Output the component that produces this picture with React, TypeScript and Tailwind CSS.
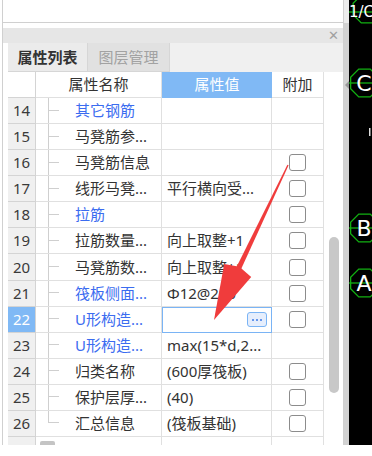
import React from "react";

type Row = {
  n: number;
  name: string;
  blue?: boolean;
  val?: string;
  cb?: boolean;
  editing?: boolean;
  last?: boolean;
};

const rows: Row[] = [
  { n: 14, name: "其它钢筋", blue: true },
  { n: 15, name: "马凳筋参..." },
  { n: 16, name: "马凳筋信息", cb: true },
  { n: 17, name: "线形马凳...", val: "平行横向受...", cb: true },
  { n: 18, name: "拉筋", blue: true, cb: true },
  { n: 19, name: "拉筋数量...", val: "向上取整+1", cb: true },
  { n: 20, name: "马凳筋数...", val: "向上取整+1", cb: true },
  { n: 21, name: "筏板侧面...", blue: true, val: "Φ12@200", cb: true },
  { n: 22, name: "U形构造...", blue: true, editing: true, cb: true },
  { n: 23, name: "U形构造...", blue: true, val: "max(15*d,2..." },
  { n: 24, name: "归类名称", val: "(600厚筏板)", cb: true },
  { n: 25, name: "保护层厚...", val: "(40)", cb: true },
  { n: 26, name: "汇总信息", val: "(筏板基础)", cb: true, last: true },
];

function Checkbox() {
  return <div className="w-[17px] h-[17px] border border-[#8c8c8c] rounded-[3px] bg-white" />;
}

function TableRow({ r }: { r: Row }) {
  const sel = r.editing;
  return (
    <div className="flex h-[26.2px]">
      <div
        className={
          sel
            ? "w-[28px] shrink-0 bg-[#80b9f5] text-white border-r border-b border-[#d4d4d4] flex items-center justify-center"
            : "w-[28px] shrink-0 bg-[#f0f0f0] text-[#3a3a3a] border-r border-b border-[#d4d4d4] flex items-center justify-center"
        }
      >
        {r.n}
      </div>
      <div className="w-[126px] shrink-0 border-r border-b border-[#e0e0e0] flex items-stretch">
        <div className="w-[12px] shrink-0" />
        <div className="w-[11px] shrink-0 flex flex-col">
          <div className="h-1/2 border-l border-b border-[#cfcfcf]" />
          <div className={r.last ? "h-1/2" : "h-1/2 border-l border-[#cfcfcf]"} />
        </div>
        <div
          className={
            r.blue
              ? "ml-[16px] flex items-center whitespace-nowrap text-[#3b6cf0]"
              : "ml-[16px] flex items-center whitespace-nowrap text-[#333333]"
          }
        >
          {r.name}
        </div>
      </div>
      {sel ? (
        <div className="w-[110px] shrink-0 border border-[#7ab4f5] bg-white flex items-center">
          <div className="ml-auto mr-[4px] w-[20px] h-[15px] rounded-[3px] border border-[#7ab4f5] bg-[#e6eefc] flex items-center justify-center gap-[2px]">
            <span className="w-[2px] h-[2px] bg-[#3b78e7] rounded-full" />
            <span className="w-[2px] h-[2px] bg-[#3b78e7] rounded-full" />
            <span className="w-[2px] h-[2px] bg-[#3b78e7] rounded-full" />
          </div>
        </div>
      ) : (
        <div className="w-[110px] shrink-0 border-r border-b border-[#e0e0e0] flex items-center pl-[5px] whitespace-nowrap text-[#333333]">
          {r.val}
        </div>
      )}
      <div className="w-[52px] shrink-0 border-r border-b border-[#e0e0e0] flex items-center justify-center">
        {r.cb ? <Checkbox /> : null}
      </div>
    </div>
  );
}

function Octagon({ cx, cy, r }: { cx: number; cy: number; r: number }) {
  const a = r * 0.924;
  const b = r * 0.383;
  const pts = [
    [cx + a, cy + b],
    [cx + b, cy + a],
    [cx - b, cy + a],
    [cx - a, cy + b],
    [cx - a, cy - b],
    [cx - b, cy - a],
    [cx + b, cy - a],
    [cx + a, cy - b],
  ]
    .map((p) => p.join(","))
    .join(" ");
  return <polygon points={pts} fill="none" stroke="#12b012" strokeWidth="1.3" />;
}

function CadArea() {
  const axes = [
    { y: 83, t: "C" },
    { y: 228, t: "B" },
    { y: 283, t: "A" },
  ];
  return (
    <div className="w-[23px] h-full bg-black">
      <svg width="23" height="445" viewBox="0 0 23 445">
        <Octagon cx={18} cy={9} r={15} />
        <line x1="0" y1="12" x2="23" y2="12" stroke="#12b012" strokeWidth="1.3" />
        <text x="0" y="17" fill="#ffffff" fontSize="15" fontFamily="DejaVu Sans, sans-serif">
          1/C
        </text>
        {axes.map((a) => (
          <g key={a.t}>
            <line x1="0" y1={a.y} x2="23" y2={a.y} stroke="#12b012" strokeWidth="1.3" />
            <Octagon cx={15.5} cy={a.y} r={15} />
            <text
              x="15"
              y={a.y + 8}
              fill="#ffffff"
              fontSize="22"
              textAnchor="middle"
              fontFamily="DejaVu Sans, sans-serif"
            >
              {a.t}
            </text>
          </g>
        ))}
        <rect x="20" y="128" width="1.5" height="8" fill="#dddddd" />
      </svg>
    </div>
  );
}

export default function App() {
  return (
    <div className="relative w-[372px] h-[456px] bg-white overflow-hidden font-['Noto_Sans','Noto_Sans_CJK_SC',sans-serif] text-[15px] leading-none">
      <div className="flex h-[445px]">
        {/* left property panel */}
        <div className="pl-[2px] w-[344px] shrink-0">
          <div className="h-full border-l border-r border-[#d0d0d0] flex flex-col">
            <div className="h-[23px] shrink-0 border-b border-[#d0d0d0] bg-white" />
            <div className="h-[5px] shrink-0 bg-white" />
            <div className="h-[15px] shrink-0 bg-[#e6e6e6] flex items-center justify-end pr-[4px]">
              <span className="text-[13px] text-[#a0a0a0] leading-none">✕</span>
            </div>
            <div className="flex-1 flex pl-[5px] min-h-0">
              <div className="flex-1 flex flex-col min-h-0">
                {/* tabs */}
                <div className="h-[29px] shrink-0 bg-[#f0f0f0] flex">
                  <div className="w-[80px] bg-[#ebebeb] border-r border-b border-[#d6d6d6] flex items-center justify-center font-bold text-[#333333]">
                    属性列表
                  </div>
                  <div className="w-[82px] bg-[#e1e1e1] border-r border-b border-[#d6d6d6] flex items-center justify-center text-[#a2a2a2]">
                    图层管理
                  </div>
                  <div className="flex-1" />
                </div>
                <div className="flex-1 flex min-h-0">
                  {/* table */}
                  <div className="w-[316px] shrink-0 flex flex-col overflow-hidden">
                    <div className="flex h-[26px] shrink-0">
                      <div className="w-[28px] shrink-0 border-r border-b border-[#d4d4d4] bg-white" />
                      <div className="w-[126px] shrink-0 border-r border-b border-[#e0e0e0] flex items-center justify-center text-[#333333]">
                        属性名称
                      </div>
                      <div className="w-[110px] shrink-0 bg-[#80b9f5] border-b border-[#80b9f5] flex items-center justify-center text-white">
                        属性值
                      </div>
                      <div className="w-[52px] shrink-0 border-r border-b border-[#e0e0e0] flex items-center justify-center text-[#333333]">
                        附加
                      </div>
                    </div>
                    {rows.map((r) => (
                      <TableRow key={r.n} r={r} />
                    ))}
                    <div className="flex flex-1">
                      <div className="w-[28px] shrink-0 bg-[#f0f0f0] border-r border-[#d4d4d4]" />
                      <div className="w-[126px] shrink-0 border-r border-[#e0e0e0] pl-[4px] pt-[4px]">
                        <div className="w-[15px] h-[4px] rounded-t-[2px] bg-[#c4c4c4]" />
                      </div>
                      <div className="w-[110px] shrink-0 border-r border-[#e0e0e0]" />
                      <div className="w-[52px] shrink-0 border-r border-[#e0e0e0]" />
                    </div>
                  </div>
                  {/* scrollbar */}
                  <div className="flex-1 flex flex-col items-center bg-white">
                    <div className="h-[165px] shrink-0" />
                    <div className="w-[10px] h-[156px] rounded-full bg-[#c8c8c8]" />
                  </div>
                </div>
              </div>
            </div>
          </div>
        </div>
        {/* splitter band */}
        <div className="w-[5px] shrink-0 flex flex-col">
          <div className="h-[23px] bg-[#ececec]" />
          <div className="flex-1 bg-[#d2d2d2] flex flex-col items-center">
            <div className="h-[58px]" />
            <div className="w-0 h-0 border-y-[4px] border-y-transparent border-r-[4px] border-r-[#9a9a9a]" />
          </div>
        </div>
        <CadArea />
      </div>
      <div className="h-[11px] bg-white" />

      {/* red annotation arrow */}
      <svg
        className="absolute left-0 top-0 pointer-events-none"
        width="372"
        height="456"
        viewBox="0 0 372 456"
      >
        <polygon points="287.4,164.8 288.6,165.2 240.0,271.5 235.4,269.3" fill="#f03c3c" />
        <polygon points="224.2,263.9 239.4,266.8 251.2,276.9 214,320" fill="#f03c3c" />
      </svg>
    </div>
  );
}
